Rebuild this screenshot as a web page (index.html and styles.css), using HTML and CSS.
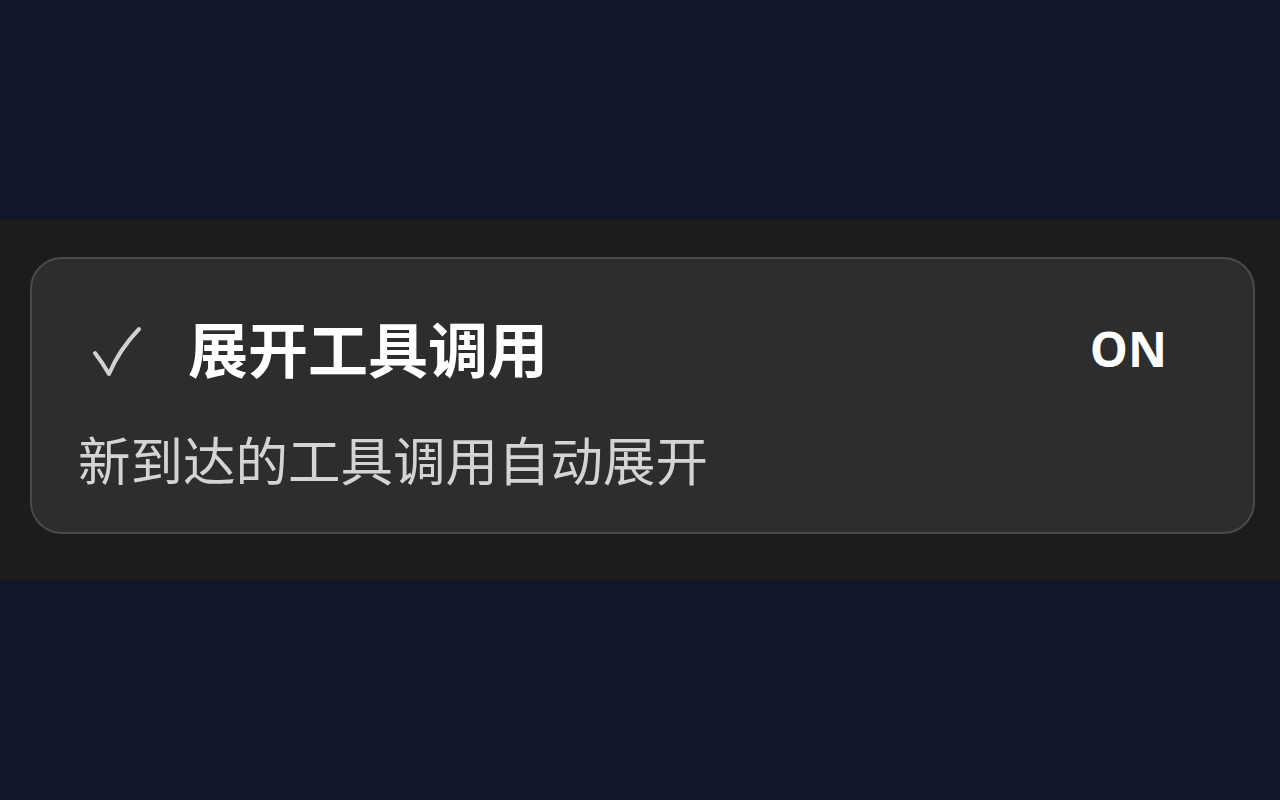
FILE: index.html
```html
<!DOCTYPE html>
<html lang="zh-CN">
<head>
<meta charset="utf-8">
<title>展开工具调用</title>
<link rel="stylesheet" href="styles.css">
</head>
<body>
<div class="band">
  <div class="card">
    <div class="row">
      <svg class="check" width="50" height="54" viewBox="0 0 50 54">
        <path d="M3 29 Q10 38 17 50 Q27 26 47 5" fill="none" stroke="#d2d2d2" stroke-width="4" stroke-linecap="round" stroke-linejoin="round"/>
      </svg>
      <div class="title">展开工具调用</div>
      <div class="state">ON</div>
    </div>
    <div class="desc">新到达的工具调用自动展开</div>
  </div>
</div>
</body>
</html>
```
FILE: styles.css
```css
html, body {
  margin: 0;
  padding: 0;
  background: #10172a;
  height: 100%;
}
body {
  padding-top: 220px;
  box-sizing: border-box;
  font-family: "Noto Sans CJK SC", "Noto Sans", sans-serif;
}
.band {
  background: #1c1c1c;
  padding: 37px 25px 46px 30px;
}
.card {
  background: #2d2d2d;
  border: 2px solid #4a4a4a;
  border-radius: 32px;
  padding: 53px 86px 39px 46px;
}
.row {
  display: flex;
  align-items: center;
  height: 70px;
}
.check {
  display: block;
  margin-left: 14px;
  margin-right: 46px;
  margin-top: 8px;
}
.title {
  color: #ffffff;
  font-size: 60px;
  font-weight: 700;
  line-height: 70px;
  flex: 1;
}
.state {
  color: #ffffff;
  font-family: "Open Sans", "Noto Sans", sans-serif;
  font-weight: 700;
  font-size: 48px;
  line-height: 70px;
  margin-top: 4px;
}
.desc {
  margin-top: 41px;
  color: #d4d4d4;
  font-size: 52.5px;
  line-height: 70px;
}
```
